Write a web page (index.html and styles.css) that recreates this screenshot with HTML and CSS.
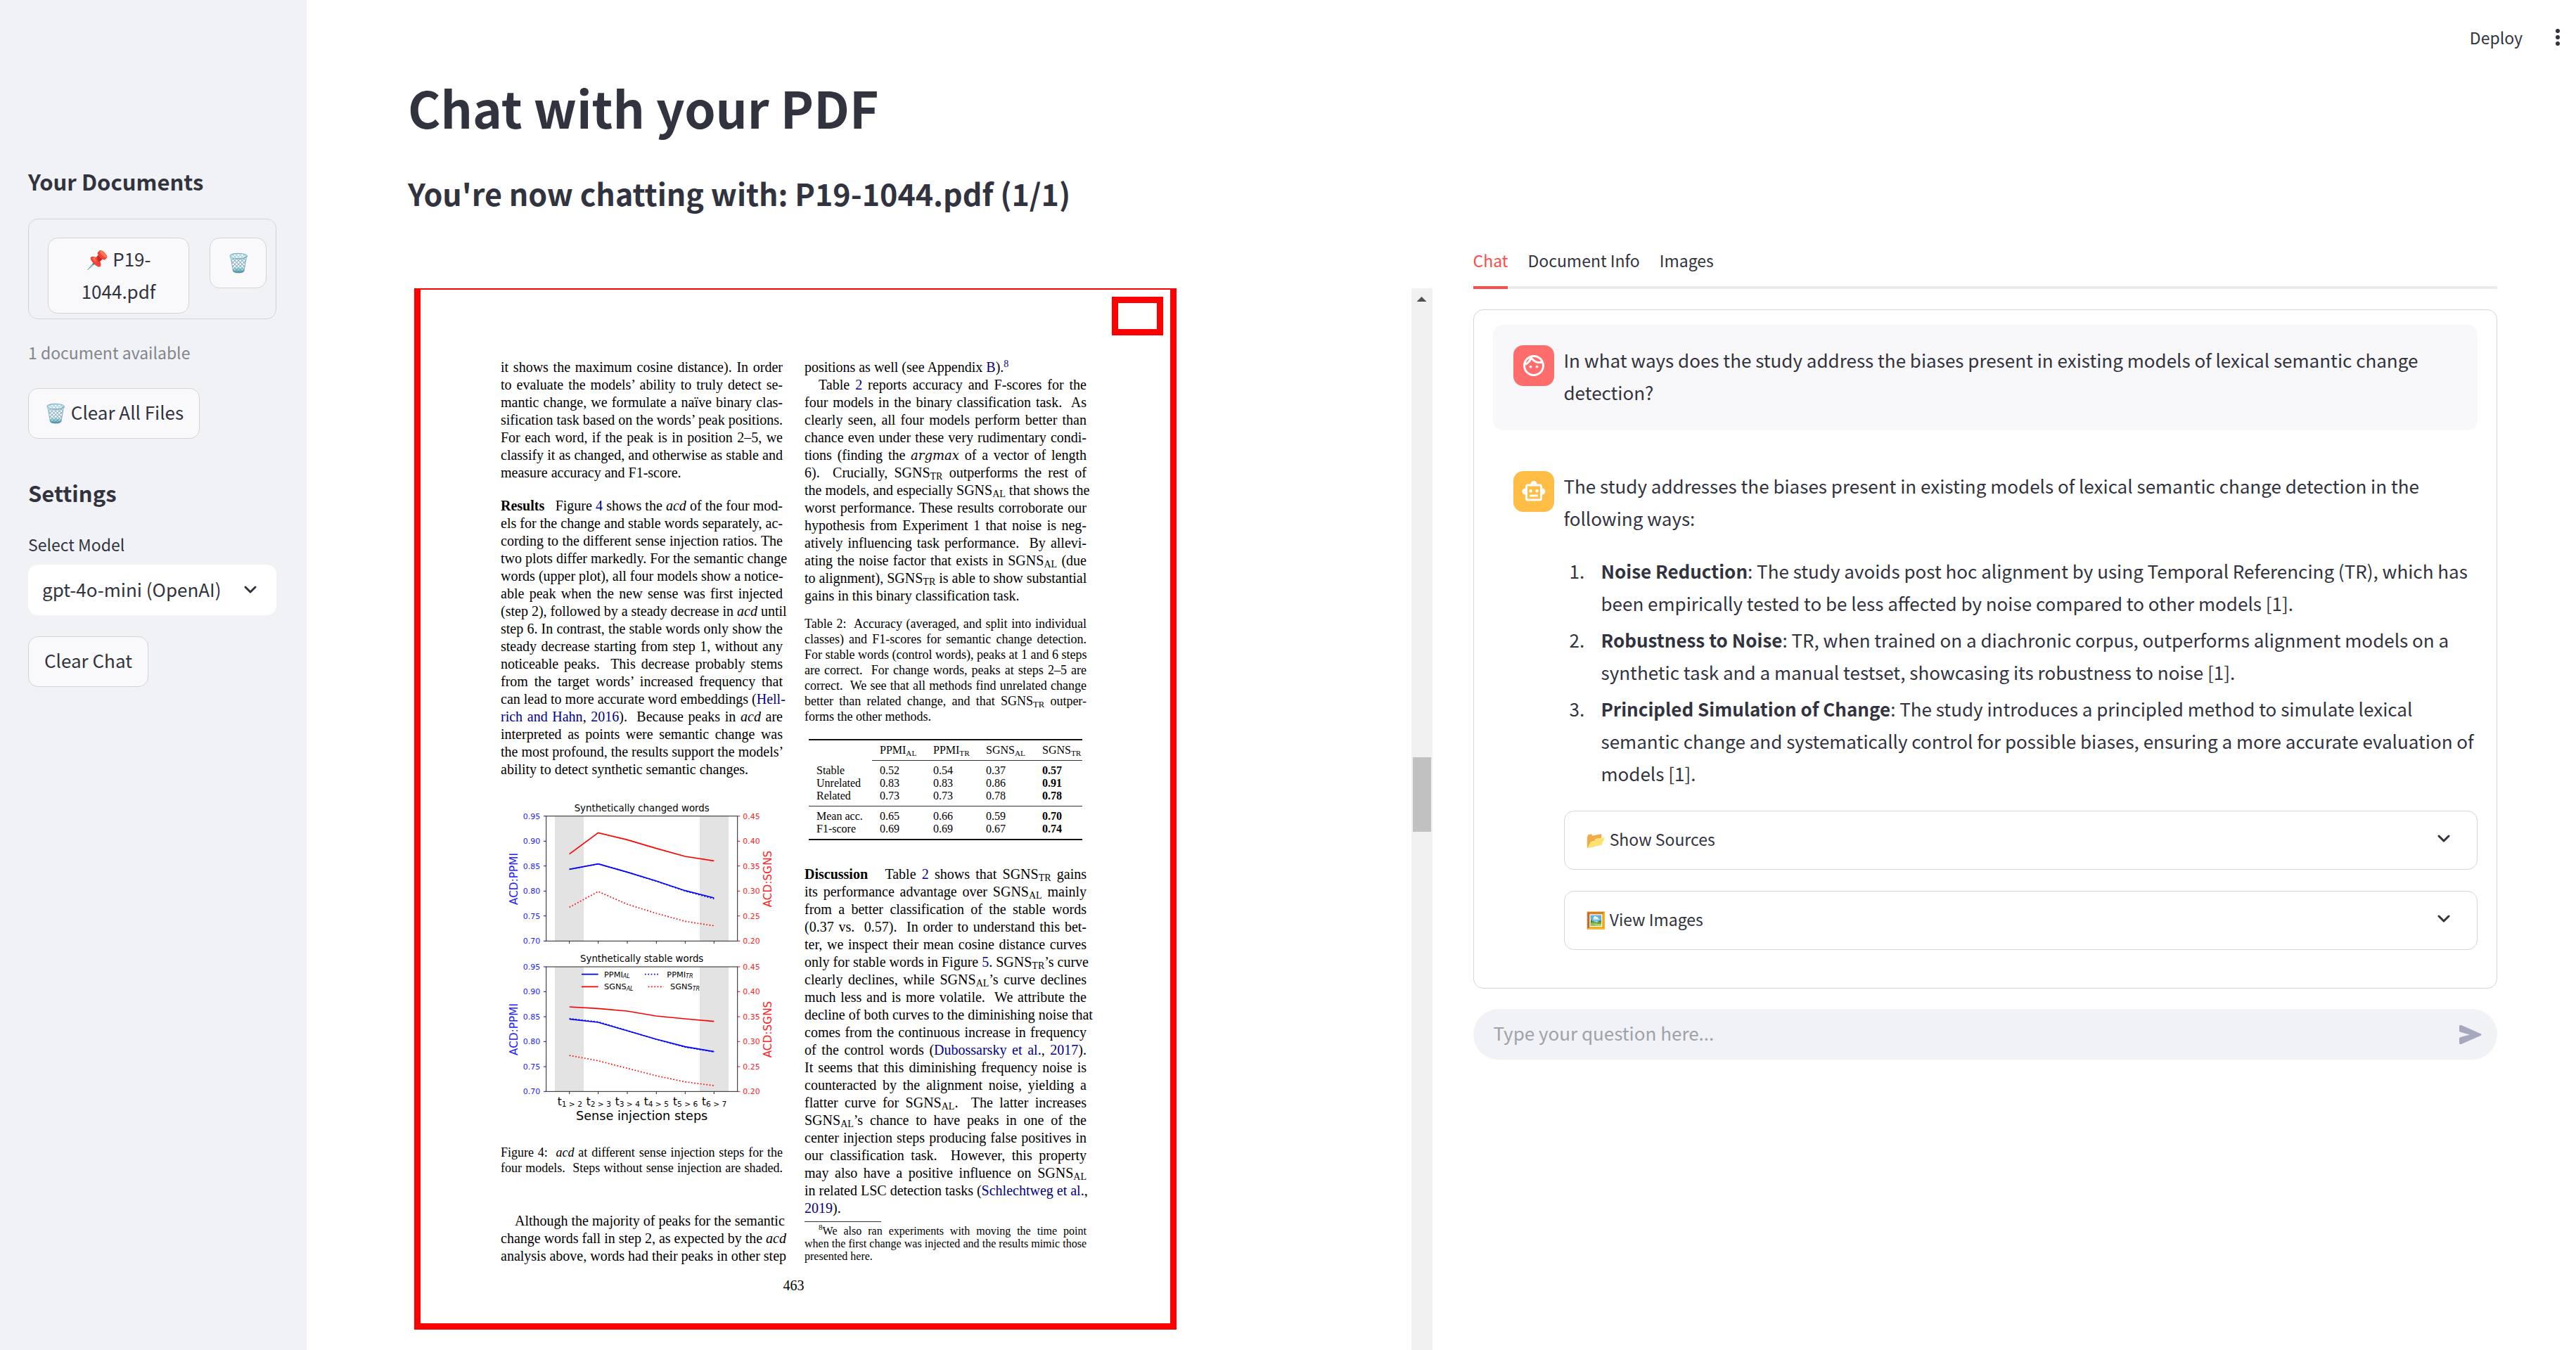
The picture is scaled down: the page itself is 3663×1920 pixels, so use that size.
FILE: index.html
```html
<!DOCTYPE html>
<html lang="en">
<head>
<meta charset="utf-8">
<title>Chat with your PDF</title>
<link rel="stylesheet" href="styles.css">
</head>
<body>
<div class="app">
  <aside class="sidebar">
    <h2 class="side-title">Your Documents</h2>
    <div class="doc-box">
      <button class="btn doc-name" type="button">📌 P19-<br>1044.pdf</button>
      <button class="btn doc-delete" type="button" aria-label="Delete document">🗑️</button>
    </div>
    <p class="doc-count">1 document available</p>
    <button class="btn" type="button">🗑️ Clear All Files</button>
    <h2 class="side-title settings">Settings</h2>
    <label class="side-label" for="model">Select Model</label>
    <div class="select-wrap">
      <select id="model" class="select"><option>gpt-4o-mini (OpenAI)</option></select>
      <svg class="chevron select-chevron" viewBox="0 0 18 12" aria-hidden="true"><path d="M2 2l7 7 7-7"/></svg>
    </div>
    <button class="btn" type="button">Clear Chat</button>
  </aside>

  <main class="main">
    <div class="toolbar">
      <button class="deploy" type="button">Deploy</button>
      <button class="menu" type="button" aria-label="Main menu">
        <svg width="8" height="26" viewBox="0 0 8 26" aria-hidden="true"><circle cx="4" cy="4" r="3"/><circle cx="4" cy="13" r="3"/><circle cx="4" cy="22" r="3"/></svg>
      </button>
    </div>
    <h1 class="title">Chat with your PDF</h1>
    <h2 class="subtitle">You're now chatting with: P19-1044.pdf (1/1)</h2>

    <div class="columns">
      <section class="viewer" aria-label="PDF document">
        <article class="page">
          <div class="marker"></div>
          <div class="page-cols">
            <div class="col">
              <p class="body">
                <span>it shows the maximum cosine distance). In order</span>
                <span>to evaluate the models’ ability to truly detect se-</span>
                <span>mantic change, we formulate a naïve binary clas-</span>
                <span>sification task based on the words’ peak positions.</span>
                <span>For each word, if the peak is in position 2–5, we</span>
                <span>classify it as changed, and otherwise as stable and</span>
                <span class="last">measure accuracy and F1-score.</span>
              </p>
              <p class="body results">
                <span><b>Results</b>&nbsp;&nbsp; Figure <a href="#fig4">4</a> shows the <i>acd</i> of the four mod-</span>
                <span>els for the change and stable words separately, ac-</span>
                <span>cording to the different sense injection ratios. The</span>
                <span>two plots differ markedly. For the semantic change</span>
                <span>words (upper plot), all four models show a notice-</span>
                <span>able peak when the new sense was first injected</span>
                <span>(step 2), followed by a steady decrease in <i>acd</i> until</span>
                <span>step 6. In contrast, the stable words only show the</span>
                <span>steady decrease starting from step 1, without any</span>
                <span>noticeable peaks.&nbsp; This decrease probably stems</span>
                <span>from the target words’ increased frequency that</span>
                <span>can lead to more accurate word embeddings (<a href="#ref">Hell-</a></span>
                <span><a href="#ref">rich and Hahn</a>, <a href="#ref">2016</a>).&nbsp; Because peaks in <i>acd</i> are</span>
                <span>interpreted as points were semantic change was</span>
                <span>the most profound, the results support the models’</span>
                <span class="last">ability to detect synthetic semantic changes.</span>
              </p>
              <svg class="figure" id="fig4" viewBox="96 90 1203 1389" role="img" aria-label="Average cosine distance per sense injection step">
                <g class="shade"><rect x="327" y="152" width="123" height="533"/><rect x="945" y="152" width="123" height="533"/><rect x="327" y="795" width="123" height="532"/><rect x="945" y="795" width="123" height="532"/></g>
                <g class="frame"><rect x="290" y="152" width="816" height="533"/><rect x="290" y="795" width="816" height="532"/>
                <path d="M389 685v11M512 685v11M636 685v11M760 685v11M883 685v11M1006 685v11M389 1327v11M512 1327v11M636 1327v11M760 1327v11M883 1327v11M1006 1327v11"/></g>
                <path class="blue thin" d="M279 152h11M279 259h11M279 365h11M279 472h11M279 578h11M279 685h11M279 795h11M279 901h11M279 1008h11M279 1114h11M279 1221h11M279 1327h11"/>
                <path class="red thin" d="M1106 152h11M1106 259h11M1106 365h11M1106 472h11M1106 578h11M1106 685h11M1106 795h11M1106 901h11M1106 1008h11M1106 1114h11M1106 1221h11M1106 1327h11"/>
                <path class="red" d="M389 314L512 223L636 253L760 290L883 324L1006 343M389 966L512 973L636 984L760 1005L883 1017L1006 1028M441 880h71"/>
                <path class="blue" d="M389 379L512 356L636 391L760 429L883 470L1006 501M389 1018L512 1032L636 1068L760 1104L883 1136L1006 1157M441 827h71"/>
                <path class="blue dots" d="M389 379L512 356L636 391L760 430L883 472L1006 505M389 1016L512 1030L636 1067L760 1105L883 1138L1006 1158M711 827h62"/>
                <path class="red dots" d="M389 541L512 474L636 528L760 567L883 601L1006 620M389 1173L512 1196L636 1228L760 1260L883 1286L1006 1302M725 880h66"/>
                <g class="tick tick-l"><text x="265" y="164">0.95</text><text x="265" y="271">0.90</text><text x="265" y="377">0.85</text><text x="265" y="484">0.80</text><text x="265" y="590">0.75</text><text x="265" y="697">0.70</text>
                <text x="265" y="807">0.95</text><text x="265" y="913">0.90</text><text x="265" y="1020">0.85</text><text x="265" y="1126">0.80</text><text x="265" y="1233">0.75</text><text x="265" y="1339">0.70</text></g>
                <g class="tick tick-r"><text x="1129" y="164">0.45</text><text x="1129" y="271">0.40</text><text x="1129" y="377">0.35</text><text x="1129" y="484">0.30</text><text x="1129" y="590">0.25</text><text x="1129" y="697">0.20</text>
                <text x="1129" y="807">0.45</text><text x="1129" y="913">0.40</text><text x="1129" y="1020">0.35</text><text x="1129" y="1126">0.30</text><text x="1129" y="1233">0.25</text><text x="1129" y="1339">0.20</text></g>
                <g class="plot-title"><text x="698" y="132">Synthetically changed words</text><text x="698" y="775">Synthetically stable words</text></g>
                <g class="axis"><text class="fill-blue" transform="translate(168 420) rotate(-90)">ACD:PPMI</text><text class="fill-blue" transform="translate(168 1062) rotate(-90)">ACD:PPMI</text><text class="fill-red" transform="translate(1250 420) rotate(-90)">ACD:SGNS</text><text class="fill-red" transform="translate(1250 1062) rotate(-90)">ACD:SGNS</text></g>
                <g class="step"><text x="391" y="1386">t<tspan class="s" dy="6">1 &gt; 2</tspan></text><text x="514" y="1386">t<tspan class="s" dy="6">2 &gt; 3</tspan></text><text x="637" y="1386">t<tspan class="s" dy="6">3 &gt; 4</tspan></text><text x="760" y="1386">t<tspan class="s" dy="6">4 &gt; 5</tspan></text><text x="884" y="1386">t<tspan class="s" dy="6">5 &gt; 6</tspan></text><text x="1007" y="1386">t<tspan class="s" dy="6">6 &gt; 7</tspan></text></g>
                <text class="xlabel" x="698" y="1448">Sense injection steps</text>
                <g class="legend"><text x="537" y="839">PPMI<tspan class="ls" dy="5">AL</tspan></text><text x="537" y="892">SGNS<tspan class="ls" dy="5">AL</tspan></text><text x="805" y="839">PPMI<tspan class="ls" dy="5">TR</tspan></text><text x="819" y="892">SGNS<tspan class="ls" dy="5">TR</tspan></text></g>
              </svg>
              <p class="caption">
                <span>Figure 4:&nbsp; <i>acd</i> at different sense injection steps for the</span>
                <span>four models.&nbsp; Steps without sense injection are shaded.</span>
              </p>
              <p class="body although">
                <span class="indent">Although the majority of peaks for the semantic</span>
                <span>change words fall in step 2, as expected by the <i>acd</i></span>
                <span>analysis above, words had their peaks in other step</span>
              </p>
            </div>
            <div class="col">
              <p class="body">
                <span class="last">positions as well (see Appendix <a href="#ref">B</a>).<sup><a href="#fn8">8</a></sup></span>
                <span class="indent">Table <a href="#tab2">2</a> reports accuracy and F-scores for the</span>
                <span>four models in the binary classification task.&nbsp; As</span>
                <span>clearly seen, all four models perform better than</span>
                <span>chance even under these very rudimentary condi-</span>
                <span>tions (finding the <i class="math">argmax</i> of a vector of length</span>
                <span>6).&nbsp; Crucially, SGNS<sub>TR</sub> outperforms the rest of</span>
                <span>the models, and especially SGNS<sub>AL</sub> that shows the</span>
                <span>worst performance. These results corroborate our</span>
                <span>hypothesis from Experiment 1 that noise is neg-</span>
                <span>atively influencing task performance.&nbsp; By allevi-</span>
                <span>ating the noise factor that exists in SGNS<sub>AL</sub> (due</span>
                <span>to alignment), SGNS<sub>TR</sub> is able to show substantial</span>
                <span class="last">gains in this binary classification task.</span>
              </p>
              <p class="caption table-caption">
                <span>Table 2:&nbsp; Accuracy (averaged, and split into individual</span>
                <span>classes) and F1-scores for semantic change detection.</span>
                <span>For stable words (control words), peaks at 1 and 6 steps</span>
                <span>are correct.&nbsp; For change words, peaks at steps 2–5 are</span>
                <span>correct.&nbsp; We see that all methods find unrelated change</span>
                <span>better than related change, and that SGNS<sub>TR</sub> outper-</span>
                <span class="last">forms the other methods.</span>
              </p>
              <table class="scores" id="tab2">
                <colgroup><col class="c0"><col class="c1"><col class="c2"><col class="c3"><col class="c4"></colgroup>
                <thead><tr><td></td><th>PPMI<sub>AL</sub></th><th>PPMI<sub>TR</sub></th><th>SGNS<sub>AL</sub></th><th>SGNS<sub>TR</sub></th></tr></thead>
                <tbody>
                  <tr><th>Stable</th><td>0.52</td><td>0.54</td><td>0.37</td><td><b>0.57</b></td></tr>
                  <tr><th>Unrelated</th><td>0.83</td><td>0.83</td><td>0.86</td><td><b>0.91</b></td></tr>
                  <tr><th>Related</th><td>0.73</td><td>0.73</td><td>0.78</td><td><b>0.78</b></td></tr>
                </tbody>
                <tbody>
                  <tr><th>Mean acc.</th><td>0.65</td><td>0.66</td><td>0.59</td><td><b>0.70</b></td></tr>
                  <tr><th>F1-score</th><td>0.69</td><td>0.69</td><td>0.67</td><td><b>0.74</b></td></tr>
                </tbody>
              </table>
              <p class="body discussion">
                <span><b>Discussion</b>&nbsp;&nbsp; Table <a href="#tab2">2</a> shows that SGNS<sub>TR</sub> gains</span>
                <span>its performance advantage over SGNS<sub>AL</sub> mainly</span>
                <span>from a better classification of the stable words</span>
                <span>(0.37 vs.&nbsp; 0.57).&nbsp; In order to understand this bet-</span>
                <span>ter, we inspect their mean cosine distance curves</span>
                <span>only for stable words in Figure <a href="#ref">5</a>. SGNS<sub>TR</sub>’s curve</span>
                <span>clearly declines, while SGNS<sub>AL</sub>’s curve declines</span>
                <span>much less and is more volatile.&nbsp; We attribute the</span>
                <span>decline of both curves to the diminishing noise that</span>
                <span>comes from the continuous increase in frequency</span>
                <span>of the control words (<a href="#ref">Dubossarsky et al.</a>, <a href="#ref">2017</a>).</span>
                <span>It seems that this diminishing frequency noise is</span>
                <span>counteracted by the alignment noise, yielding a</span>
                <span>flatter curve for SGNS<sub>AL</sub>.&nbsp; The latter increases</span>
                <span>SGNS<sub>AL</sub>’s chance to have peaks in one of the</span>
                <span>center injection steps producing false positives in</span>
                <span>our classification task.&nbsp; However, this property</span>
                <span>may also have a positive influence on SGNS<sub>AL</sub></span>
                <span>in related LSC detection tasks (<a href="#ref">Schlechtweg et al.</a>,</span>
                <span class="last"><a href="#ref">2019</a>).</span>
              </p>
              <hr class="note-rule">
              <p class="note" id="fn8">
                <span class="indent"><sup>8</sup>We also ran experiments with moving the time point</span>
                <span>when the first change was injected and the results mimic those</span>
                <span class="last">presented here.</span>
              </p>
            </div>
          </div>
          <p class="folio">463</p>
        </article>
        <div class="scrollbar" aria-hidden="true"><div class="arrow"></div><div class="thumb"></div></div>
      </section>

      <section class="chat">
        <nav class="tabs">
          <a class="tab active" href="#chat">Chat</a>
          <a class="tab" href="#info">Document Info</a>
          <a class="tab" href="#images">Images</a>
        </nav>
        <div class="card" id="chat">
          <div class="message user">
            <div class="avatar"><svg viewBox="0 0 24 24" aria-hidden="true"><path d="M10.25 13c0 .69-.56 1.25-1.25 1.25S7.75 13.69 7.75 13s.56-1.25 1.25-1.25 1.25.56 1.25 1.25zM15 11.75c-.69 0-1.25.56-1.25 1.25s.56 1.25 1.25 1.25 1.25-.56 1.25-1.25-.56-1.25-1.25-1.25zm7 .25c0 5.52-4.48 10-10 10S2 17.52 2 12 6.48 2 12 2s10 4.48 10 10zM10.66 4.12C12.06 6.44 14.6 8 17.5 8c.46 0 .91-.05 1.34-.12C17.44 5.56 14.9 4 12 4c-.46 0-.91.05-1.34.12zM4.42 9.47c1.71-.97 3.03-2.55 3.66-4.44C6.37 6 5.05 7.58 4.42 9.47zM20 12c0-.78-.12-1.53-.33-2.24-.7.15-1.42.24-2.17.24-3.13 0-5.92-1.44-7.76-3.69C8.69 8.87 6.6 10.88 4 11.86c.01.04 0 .09 0 .14 0 4.42 3.58 8 8 8s8-3.58 8-8z"/></svg></div>
            <div class="content"><p>In what ways does the study address the biases present in existing models of lexical semantic change detection?</p></div>
          </div>
          <div class="message bot">
            <div class="avatar"><svg viewBox="0 0 24 24" aria-hidden="true"><path d="M20 9V7c0-1.1-.9-2-2-2h-3c0-1.66-1.34-3-3-3S9 3.34 9 5H6c-1.1 0-2 .9-2 2v2c-1.66 0-3 1.34-3 3s1.34 3 3 3v4c0 1.1.9 2 2 2h12c1.1 0 2-.9 2-2v-4c1.66 0 3-1.34 3-3s-1.34-3-3-3zm-2 10H6V7h12v12zm-9-6c-.83 0-1.5-.67-1.5-1.5S8.17 10 9 10s1.5.67 1.5 1.5S9.83 13 9 13zm7.5-1.5c0 .83-.67 1.5-1.5 1.5s-1.5-.67-1.5-1.5.67-1.5 1.5-1.5 1.5.67 1.5 1.5zM8 15h8v2H8v-2z"/></svg></div>
            <div class="content">
              <p>The study addresses the biases present in existing models of lexical semantic change detection in the following ways:</p>
              <ol class="points">
                <li><div><b>Noise Reduction</b>: The study avoids post hoc alignment by using Temporal Referencing (TR), which has been empirically tested to be less affected by noise compared to other models [1].</div></li>
                <li><div><b>Robustness to Noise</b>: TR, when trained on a diachronic corpus, outperforms alignment models on a synthetic task and a manual testset, showcasing its robustness to noise [1].</div></li>
                <li><div><b>Principled Simulation of Change</b>: The study introduces a principled method to simulate lexical semantic change and systematically control for possible biases, ensuring a more accurate evaluation of models [1].</div></li>
              </ol>
              <button class="expander" type="button"><span>📂 Show Sources</span><svg class="chevron" viewBox="0 0 18 12" aria-hidden="true"><path d="M2 2l7 7 7-7"/></svg></button>
              <button class="expander" type="button"><span>🖼️ View Images</span><svg class="chevron" viewBox="0 0 18 12" aria-hidden="true"><path d="M2 2l7 7 7-7"/></svg></button>
            </div>
          </div>
        </div>
        <form class="ask">
          <input class="ask-input" type="text" aria-label="Your question" placeholder="Type your question here...">
          <button class="send" type="button" aria-label="Send"><svg viewBox="0 0 32 27" aria-hidden="true"><path d="M0 2Q0-1 3 0L30 12Q33 13.500 30 15L3 27Q0 28 0 25V19Q0 17.500 2 17L15 13.500L2 10Q0 9.500 0 8Z"/></svg></button>
        </form>
      </section>
    </div>
  </main>
</div>
</body>
</html>
```
FILE: styles.css
```css
* { box-sizing: border-box; }

body {
  margin: 0;
  background: #fff;
  color: #31333f;
  font: 26px/46px "Noto Sans CJK SC", "Noto Sans", sans-serif;
}
h1, h2, p, ol { margin: 0; }
button, input, select { font: inherit; color: inherit; }

.app { display: flex; height: 100vh; overflow: hidden; }

/* Sidebar */
.sidebar {
  flex: 0 0 436px;
  padding: 236px 43px 0 40px;
  background: #f0f2f6;
}
.side-title { font-size: 31px; line-height: 44px; font-weight: 600; }
.doc-box {
  display: flex;
  align-items: flex-start;
  gap: 29px;
  height: 143px;
  margin-top: 31px;
  padding: 26px 13px 0 27px;
  border: 1px solid #d2d4d9;
  border-radius: 14px;
}
.btn {
  display: block;
  min-height: 72px;
  padding: 10px 22px 14px;
  border: 1px solid #d2d4d9;
  border-radius: 14px;
  background: #f9f9fb;
}
.doc-name { flex: 1; padding: 6px 0 8px; }
.doc-delete { flex: 0 0 81px; padding: 10px 0 14px; }
.doc-count { margin: 24px 0 28px; font-size: 23px; color: #83858c; }
.settings { margin-top: 55px; }
.side-label { display: block; margin-top: 28px; font-size: 23px; }
.select-wrap { position: relative; margin: 6px 0 30px; }
.select {
  display: block;
  width: 100%;
  height: 72px;
  padding: 0 20px 2px;
  border: 0;
  border-radius: 14px;
  background: #fff;
  appearance: none;
}
.chevron { width: 18px; height: 12px; fill: none; stroke: #31333f; stroke-width: 3; stroke-linecap: round; stroke-linejoin: round; }
.select-chevron { position: absolute; right: 28px; top: 30px; }

/* Main area */
.main { position: relative; flex: 1; min-width: 0; padding: 105px 112px 0 144px; }
.toolbar { position: absolute; top: 30px; right: 22px; display: flex; align-items: center; gap: 46px; }
.toolbar button { padding: 0; border: 0; background: none; font-size: 23px; }
.menu svg { display: block; fill: #31333f; }
.title { font-size: 71px; line-height: 94px; font-weight: 700; }
.subtitle { margin-top: 45px; font-size: 43px; line-height: 60px; font-weight: 600; }
.columns { display: grid; grid-template-columns: 1fr 1fr; gap: 58px; margin-top: 45px; }

/* PDF viewer */
.viewer {
  display: flex;
  justify-content: space-between;
  align-items: flex-start;
  height: calc(100vh - 410px);
  margin-top: 61px;
  padding-left: 9px;
  overflow: hidden;
}
.page {
  position: relative;
  width: 1084px;
  height: 1481px;
  padding-top: 98px;
  border: 9px solid #f00;
  border-top-width: 2px;
  color: #000;
  font-family: "Liberation Serif", serif;
}
.marker { position: absolute; top: 10px; right: 10px; width: 73px; height: 55px; border: 9px solid #f00; }
.page-cols { display: flex; gap: 31px; padding-left: 114px; }
.col { width: 401px; }
.page p > span { display: block; white-space: nowrap; text-align: justify; text-align-last: justify; }
.page p > .last { text-align-last: left; }
.page a { color: #00008b; text-decoration: none; }
.page sub, .page sup { font-size: 70%; line-height: 0; }
.page sub { vertical-align: -3px; }
.page sup { vertical-align: 7px; }
.page p > .indent { padding-left: 20px; }
.body { font-size: 20px; line-height: 25px; }
.caption { font-size: 18px; line-height: 22px; }
.note { font-size: 16px; line-height: 18px; }
.results { margin-top: 22px; }
.math { font-family: "DejaVu Serif", "Liberation Serif", serif; font-size: 18px; }
.figure { display: block; width: 100%; margin: 33px 0 25px; font-family: "DejaVu Sans", sans-serif; }
.although { margin-top: 52px; }
.table-caption { margin-top: 16px; }
.discussion { margin-top: 36px; }
.note-rule { width: 109px; margin: 6px 0 4px; border: 0; border-top: 1px solid #333; }
.folio { margin-top: 16px; padding-right: 5px; text-align: center; font-size: 20px; line-height: 26px; }

.shade rect { fill: #e3e3e3; }
.frame { fill: none; stroke: #222; stroke-width: 3; }
.red { fill: none; stroke: #f00; stroke-width: 5; }
.blue { fill: none; stroke: #00f; stroke-width: 5; }
.thin { stroke-width: 3; }
.dots { stroke-dasharray: 5 8; }
.tick { font-size: 33px; }
.tick-l { fill: #22f; text-anchor: end; }
.tick-r { fill: #f22; }
.plot-title { font-size: 40px; text-anchor: middle; }
.axis { font-size: 46px; text-anchor: middle; }
.fill-blue { fill: #22f; }
.fill-red { fill: #f22; }
.step { font-size: 46px; text-anchor: middle; }
.step .s { font-size: 32px; }
.xlabel { font-size: 53px; text-anchor: middle; }
.legend { font-size: 34px; }
.legend .ls { font-size: 24px; font-style: italic; }

.scores {
  table-layout: fixed;
  width: 389px;
  margin: 21px 0 0 6px;
  border-collapse: collapse;
  border-top: 2px solid #111;
  border-bottom: 2px solid #111;
  font-size: 16px;
  line-height: 18px;
}
.scores th, .scores td { padding: 0 0 0 11px; text-align: left; font-weight: 400; white-space: nowrap; }
.scores thead th { padding: 5px 0 5px 11px; border-bottom: 1px solid #333; }
.scores tbody tr:first-child > * { padding-top: 5px; }
.scores tbody tr:last-child > * { padding-bottom: 5px; }
.scores tbody + tbody { border-top: 1px solid #333; }
.c0 { width: 90px; }
.c1 { width: 76px; }
.c2 { width: 75px; }
.c3 { width: 80px; }
.c4 { width: 68px; }

.scrollbar { width: 30px; height: 100%; background: #f1f1f1; }
.arrow { width: 14px; height: 7px; margin: 12px auto 0; background: #505050; clip-path: polygon(50% 0, 100% 100%, 0 100%); }
.thumb { height: 106px; margin: 648px 2px 0; background: #c1c1c1; }

/* Chat */
.tabs { display: flex; gap: 28px; height: 62px; border-bottom: 4px solid #eaebec; }
.tab { height: 62px; line-height: 42px; font-size: 23px; color: inherit; text-decoration: none; }
.active { color: #ff4b4b; border-bottom: 4px solid #ff4b4b; }
.card { margin-top: 29px; padding: 21px 27px 25px; border: 1px solid #d6d6d9; border-radius: 14px; }
.message { display: flex; gap: 14px; padding: 27px 0 29px 29px; border-radius: 14px; }
.user { margin-bottom: 29px; padding-bottom: 31px; background: #f8f8fb; }
.avatar { display: flex; flex: 0 0 58px; height: 58px; margin-top: 2px; align-items: center; justify-content: center; border-radius: 14px; }
.avatar svg { width: 36px; height: 36px; fill: #fff; }
.user .avatar { background: #ff6c6c; }
.bot .avatar { background: #ffbd45; }
.content { flex: 1; min-width: 0; }
.points { margin: 29px 0; padding: 0 0 0 8px; list-style: none; counter-reset: point; }
.points li { display: flex; margin-bottom: 6px; counter-increment: point; }
.points li::before { content: counter(point) "."; flex: 0 0 45px; }
.points b { font-weight: 600; }
.expander {
  display: flex;
  justify-content: space-between;
  align-items: center;
  width: 100%;
  height: 84px;
  margin-top: 30px;
  padding: 0 38px 4px 30px;
  border: 1px solid #d6d6d9;
  border-radius: 14px;
  background: #fff;
  font-size: 23px;
}
.ask { display: flex; align-items: center; height: 72px; margin-top: 29px; padding: 0 22px 0 29px; border-radius: 36px; background: #f0f2f6; }
.ask-input { flex: 1; padding: 0 0 4px; border: 0; outline: 0; background: none; }
.ask-input::placeholder { color: #a0a2a9; opacity: 1; }
.send { padding: 0; border: 0; background: none; }
.send svg { display: block; width: 32px; height: 27px; fill: #a6a8bd; }
```
